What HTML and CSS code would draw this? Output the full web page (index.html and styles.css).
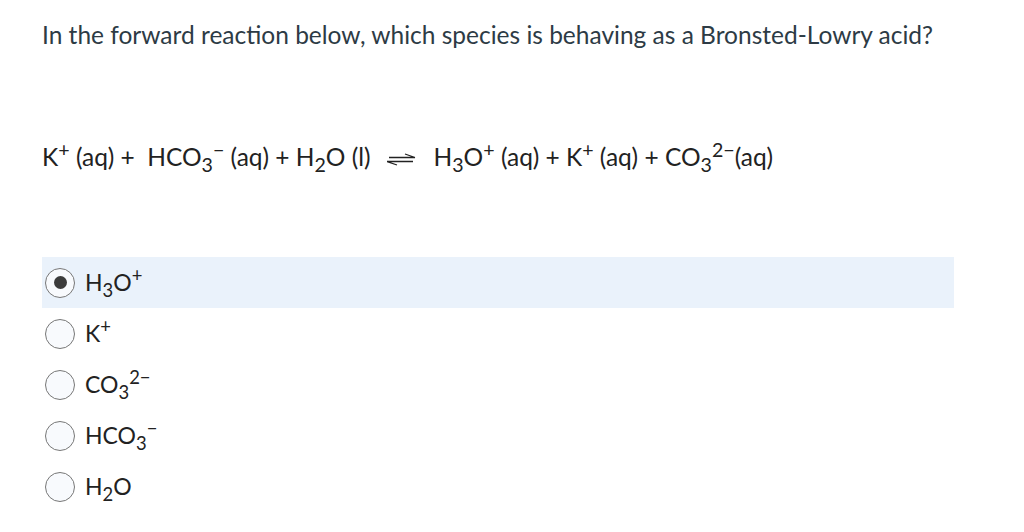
FILE: index.html
```html
<!DOCTYPE html>
<html>
<head>
<meta charset="utf-8">
<link rel="stylesheet" href="styles.css">
</head>
<body>
<div class="page">
  <p class="question">In the forward reaction below, which species is behaving as a Bronsted-Lowry acid?</p>
  <p class="equation">K<sup>+</sup> (aq) +&nbsp; HCO<sub>3</sub><sup>−</sup> (aq) + H<sub>2</sub>O (l)<svg class="arrows" width="30" height="14" viewBox="0 0 30 14"><path d="M2 4.5H28M18 1L28 4.5" fill="none" stroke="#222" stroke-width="1.3"/><path d="M0 8.5H26M0 8.5L10 12" fill="none" stroke="#222" stroke-width="1.3"/></svg>H<sub>3</sub>O<sup>+</sup> (aq) + K<sup>+</sup> (aq) + CO<sub>3</sub><sup>2−</sup>(aq)</p>
  <ul class="options">
    <li class="option selected"><span class="radio"><span class="dot"></span></span><span class="label">H<sub>3</sub>O<sup>+</sup></span></li>
    <li class="option"><span class="radio"></span><span class="label">K<sup>+</sup></span></li>
    <li class="option"><span class="radio"></span><span class="label">CO<sub>3</sub><sup>2−</sup></span></li>
    <li class="option"><span class="radio"></span><span class="label">HCO<sub>3</sub><sup>−</sup></span></li>
    <li class="option"><span class="radio"></span><span class="label">H<sub>2</sub>O</span></li>
  </ul>
</div>
</body>
</html>
```
FILE: styles.css
```css
html, body {
  margin: 0;
  padding: 0;
  background: #ffffff;
}
body {
  font-family: Lato, "Liberation Sans", sans-serif;
  color: #2d3b45;
}
.page {
  padding: 18px 70px 0 42px;
}
.question {
  margin: 0;
  font-size: 24.5px;
  line-height: 34px;
}
.equation {
  margin: 90px 0 0 0;
  font-size: 24.5px;
  line-height: 30px;
  color: #222;
}
sub, sup {
  font-size: 0.8em;
  line-height: 0;
}
.arrows {
  vertical-align: -1px;
  margin: 0 17px 0 16px;
}
.options {
  list-style: none;
  margin: 85px 0 0 0;
  padding: 0;
  width: 912px;
}
.option {
  display: flex;
  align-items: center;
  height: 51px;
  font-size: 23px;
  color: #222;
}
.option.selected {
  background: #eaf2fb;
}
.radio {
  box-sizing: border-box;
  width: 30px;
  height: 30px;
  border-radius: 50%;
  border: 1.3px solid #777;
  background: #f8fafd;
  margin-left: 3px;
  margin-right: 10px;
  display: flex;
  align-items: center;
  justify-content: center;
}
.dot {
  width: 13px;
  height: 13px;
  border-radius: 50%;
  background: #3c3c3c;
}
.label {
  position: relative;
  top: -1px;
}
```
